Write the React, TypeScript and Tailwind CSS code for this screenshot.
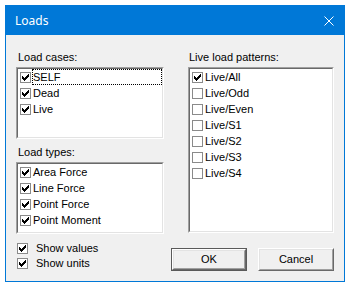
import React from "react";

const font = { fontFamily: '"Liberation Sans", Arial, sans-serif' };

function Check({ checked }: { checked: boolean }) {
  return (
    <span className="w-[11px] h-[11px] shrink-0 border border-[#8a8a8a] bg-white flex items-center justify-center">
      {checked && (
        <svg width="7" height="7" viewBox="0 0 7 7" shapeRendering="crispEdges">
          <path
            d="M0 2h1v3h-1z M1 3h1v3h-1z M2 4h1v3h-1z M3 3h1v3h-1z M4 2h1v3h-1z M5 1h1v3h-1z M6 0h1v3h-1z"
            fill="#000"
          />
        </svg>
      )}
    </span>
  );
}

function Item({ label, checked, focus }: { label: string; checked: boolean; focus?: boolean }) {
  return (
    <div className="h-[16px] flex items-center pl-[2px]">
      <Check checked={checked} />
      <span
        className={
          "ml-[1px] flex-1 h-full flex items-center border " +
          (focus ? "border-dotted border-black" : "border-transparent")
        }
      >
        {label}
      </span>
    </div>
  );
}

function ListBox({ h, children }: { h: string; children: React.ReactNode }) {
  return (
    <div
      className={
        "border border-t-[#a0a0a0] border-l-[#a0a0a0] border-r-white border-b-white " + h
      }
    >
      <div className="h-full border border-t-[#696969] border-l-[#696969] border-r-[#e3e3e3] border-b-[#e3e3e3] bg-white">
        {children}
      </div>
    </div>
  );
}

function Button({ label, def }: { label: string; def?: boolean }) {
  const inner = (
    <div className="h-full border border-t-white border-l-white border-r-[#696969] border-b-[#696969]">
      <div className="h-full border border-t-[#e3e3e3] border-l-[#e3e3e3] border-r-[#a0a0a0] border-b-[#a0a0a0] flex items-center justify-center bg-[#f0f0f0]">
        {label}
      </div>
    </div>
  );
  return (
    <div className={"w-[76px] h-[23px] " + (def ? "border border-[#5a5a5a]" : "")}>{inner}</div>
  );
}

export default function App() {
  return (
    <div className="w-[350px] h-[287px] bg-white p-[5px]">
      <div className="w-[340px] h-[277px] border border-[#0078d7] bg-[#f0f0f0] flex flex-col">
        <div
          className="h-[29px] bg-[#0078d7] flex items-center justify-between pl-[9px] pr-[10px] text-white text-[12px]"
          style={{ fontFamily: '"Noto Sans", "Open Sans", sans-serif' }}
        >
          <span>Loads</span>
          <svg width="10" height="10" viewBox="0 0 10 10">
            <path d="M0.5 0.5 L9.5 9.5 M9.5 0.5 L0.5 9.5" stroke="#fff" strokeWidth="1" />
          </svg>
        </div>
        <div className="flex-1 pt-[16px] px-[10px] text-[11px] text-black" style={font}>
          <div className="flex gap-[24px]">
            <div className="w-[148px] flex flex-col">
              <div className="h-[13px] leading-[13px] mb-[3px] pl-[2px]">Load cases:</div>
              <ListBox h="h-[72px]">
                <Item label="SELF" checked focus />
                <Item label="Dead" checked />
                <Item label="Live" checked />
              </ListBox>
              <div className="h-[13px] leading-[13px] mb-[3px] mt-[7px] pl-[2px]">Load types:</div>
              <ListBox h="h-[72px]">
                <Item label="Area Force" checked />
                <Item label="Line Force" checked />
                <Item label="Point Force" checked />
                <Item label="Point Moment" checked />
              </ListBox>
            </div>
            <div className="w-[146px] flex flex-col">
              <div className="h-[13px] leading-[13px] mb-[3px] pl-[1px]">Live load patterns:</div>
              <ListBox h="h-[166px]">
                <Item label="Live/All" checked />
                <Item label="Live/Odd" checked={false} />
                <Item label="Live/Even" checked={false} />
                <Item label="Live/S1" checked={false} />
                <Item label="Live/S2" checked={false} />
                <Item label="Live/S3" checked={false} />
                <Item label="Live/S4" checked={false} />
              </ListBox>
            </div>
          </div>
          <div className="flex justify-between">
            <div className="pt-[7px] pl-[1px] flex flex-col">
              <div className="h-[15px] flex items-center gap-[8px]">
                <Check checked />
                <span>Show values</span>
              </div>
              <div className="h-[15px] flex items-center gap-[8px]">
                <Check checked />
                <span>Show units</span>
              </div>
            </div>
            <div className="pt-[14px] flex gap-[11px]">
              <Button label="OK" def />
              <Button label="Cancel" />
            </div>
          </div>
        </div>
      </div>
    </div>
  );
}
